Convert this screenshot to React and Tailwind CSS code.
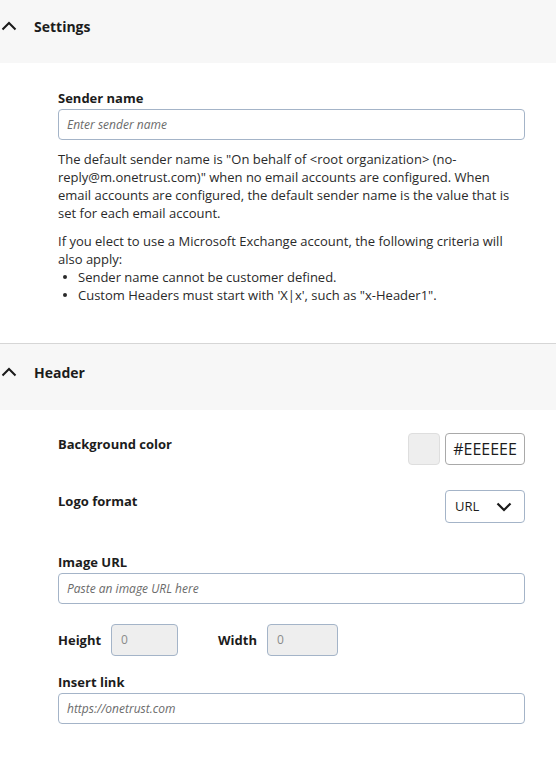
const ChevronUp = () => (
  <svg width="16" height="10" viewBox="0 0 16 10" fill="none" className="shrink-0">
    <path d="M1.5 8.5 L8 2 L14.5 8.5" stroke="#1a1a1a" strokeWidth="2" />
  </svg>
);

const ChevronDown = () => (
  <svg width="16" height="10" viewBox="0 0 16 10" fill="none">
    <path d="M1.5 1.5 L8 8 L14.5 1.5" stroke="#1a1a1a" strokeWidth="2.2" />
  </svg>
);

const SectionHeader = ({ title, border }) => (
  <div
    className={`flex items-start gap-[17px] bg-[#f7f7f7] pl-[1px] ${border ? "border-t border-[#d6d6d6] h-[67px] pt-[19px]" : "h-[63px] pt-[17px]"}`}
  >
    <div className="pt-[4px]">
      <ChevronUp />
    </div>
    <span className="text-[14px] leading-[20px] font-bold text-[#1c1c1c]">{title}</span>
  </div>
);

const Label = ({ children, className = "" }) => (
  <div className={`text-[13px] leading-[20px] font-bold text-[#1c1c1c] ${className}`}>{children}</div>
);

const TextInput = ({ placeholder }) => (
  <div className="h-[31px] w-full rounded-[4px] border border-[#a4b4c8] flex items-center px-[8px]">
    <span className="text-[12px] italic text-[#6b6b6b]">{placeholder}</span>
  </div>
);

const Bullet = ({ children }) => (
  <li className="flex items-start">
    <span className="w-[20px] pl-[5px] pt-[7px]">
      <span className="block w-[4px] h-[4px] rounded-full bg-[#2a2a2a]" />
    </span>
    <span>{children}</span>
  </li>
);

export default function App() {
  return (
    <div className="w-[556px] bg-white" style={{ fontFamily: '"Open Sans", sans-serif' }}>
      <SectionHeader title="Settings" />
      <div className="pl-[58px] pr-[31px] pt-[25px] pb-[39px] text-[#2a2a2a]">
        <Label className="mb-px">Sender name</Label>
        <TextInput placeholder="Enter sender name" />
        <p className="mt-[10px] text-[13px] leading-[18px]">
          The default sender name is "On behalf of &lt;root organization&gt; (no-reply@m.onetrust.com)" when no email
          accounts are configured. When email accounts are configured, the default sender name is the value that is set
          for each email account.
        </p>
        <p className="mt-[10px] text-[13px] leading-[18px]">
          If you elect to use a Microsoft Exchange account, the following criteria will also apply:
        </p>
        <ul className="text-[13px] leading-[18px]">
          <Bullet>Sender name cannot be customer defined.</Bullet>
          <Bullet>Custom Headers must start with 'X|x', such as "x-Header1".</Bullet>
        </ul>
      </div>

      <SectionHeader title="Header" border />
      <div className="pl-[58px] pr-[31px] pt-[23px] pb-[36px]">
        <div className="flex items-start justify-between">
          <Label className="pt-[1px]">Background color</Label>
          <div className="flex gap-[5px]">
            <div className="w-[32px] h-[32px] rounded-[4px] border border-[#dedede] bg-[#eeeeee]" />
            <div className="w-[80px] h-[32px] rounded-[4px] border border-[#a9a9a9] flex items-center justify-center text-[16px] text-[#1c1c1c]">
              #EEEEEE
            </div>
          </div>
        </div>

        <div className="flex items-start justify-between mt-[25px]">
          <Label className="pt-px">Logo format</Label>
          <div className="w-[80px] h-[33px] rounded-[4px] border border-[#a4b4c8] flex items-center justify-between pl-[9px] pr-[12px]">
            <span className="text-[13px] text-[#1c1c1c]">URL</span>
            <ChevronDown />
          </div>
        </div>

        <Label className="mt-[29px] mb-px">Image URL</Label>
        <TextInput placeholder="Paste an image URL here" />

        <div className="flex items-center mt-[20px]">
          <Label className="w-[53px]">Height</Label>
          <div className="w-[67px] h-[32px] rounded-[4px] border border-[#a4b4c8] bg-[#eeeeee] flex items-center px-[9px] text-[12px] text-[#8a8a8a]">
            0
          </div>
          <Label className="ml-[40px] w-[49px]">Width</Label>
          <div className="w-[71px] h-[32px] rounded-[4px] border border-[#a4b4c8] bg-[#eeeeee] flex items-center px-[9px] text-[12px] text-[#8a8a8a]">
            0
          </div>
        </div>

        <Label className="mt-[16px] mb-px">Insert link</Label>
        <TextInput placeholder="https://onetrust.com" />
      </div>
    </div>
  );
}
